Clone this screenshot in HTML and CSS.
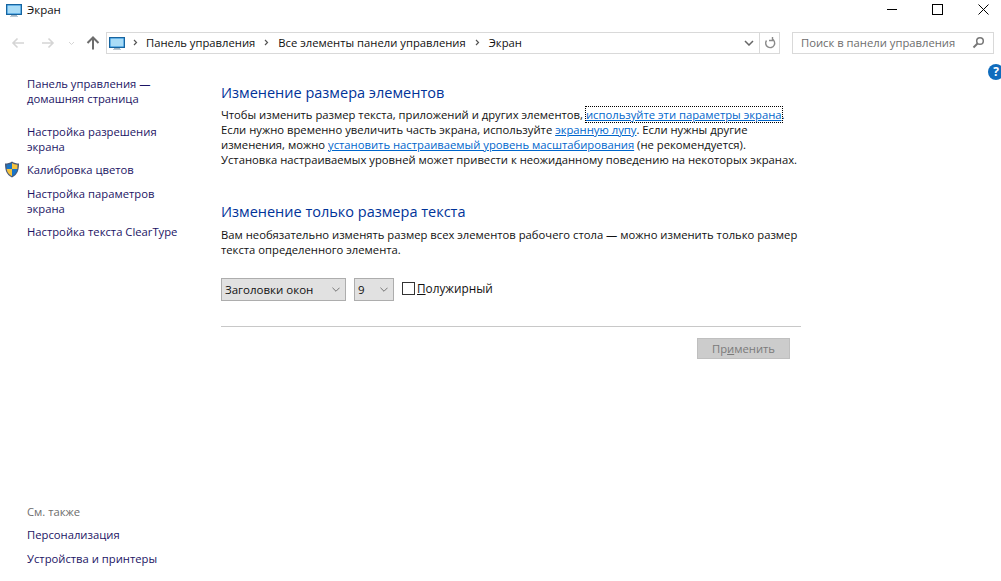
FILE: index.html
```html
<!DOCTYPE html>
<html lang="ru">
<head>
<meta charset="utf-8">
<title>Экран</title>
<link rel="stylesheet" href="styles.css">
</head>
<body>
<div class="window">
  <header class="titlebar">
    <svg class="monitor" width="16" height="14" viewBox="0 0 16 14"><rect x="0.5" y="0.5" width="15" height="10" fill="#1e86d4" stroke="#17649f"/><rect x="1.5" y="1.5" width="13" height="8" fill="#a9dcf7"/><rect x="5" y="11" width="6" height="1" fill="#9db4c4"/><rect x="4" y="12" width="8" height="1" fill="#b9c6d0"/></svg>
    <span class="title">Экран</span>
    <div class="winbtns">
      <svg class="winbtn" width="46" height="18" viewBox="0 0 46 18"><rect x="18" y="9" width="10" height="1" fill="#000"/></svg>
      <svg class="winbtn" width="46" height="18" viewBox="0 0 46 18"><rect x="17.500" y="4.500" width="10" height="10" fill="none" stroke="#000"/></svg>
      <svg class="winbtn" width="40" height="18" viewBox="0 0 40 18"><path d="M17.500 4.500l10 10M27.500 4.500l-10 10" fill="none" stroke="#000"/></svg>
    </div>
  </header>
  <nav class="navbar">
    <svg class="navarrow" width="14" height="12" viewBox="0 0 14 12"><path d="M13 6H2M6.500 1.500L2 6l4.500 4.500" fill="none" stroke="#d5d5d5" stroke-width="1.600"/></svg>
    <svg class="navarrow fwd" width="14" height="12" viewBox="0 0 14 12"><path d="M1 6h11M7.500 1.500L12 6l-4.500 4.500" fill="none" stroke="#d5d5d5" stroke-width="1.600"/></svg>
    <svg class="recent" width="7" height="5" viewBox="0 0 7 5"><path d="M1 1l2.500 2.500L6 1" fill="none" stroke="#d5d5d5"/></svg>
    <svg class="up" width="14" height="14" viewBox="0 0 14 14"><path d="M7 13.500V2M1.500 7L7 1.500 12.500 7" fill="none" stroke="#6d6d6d" stroke-width="2"/></svg>
    <div class="address">
      <svg class="monitor addr-icon" width="16" height="14" viewBox="0 0 16 14"><rect x="0.5" y="0.5" width="15" height="10" fill="#1e86d4" stroke="#17649f"/><rect x="1.5" y="1.5" width="13" height="8" fill="#a9dcf7"/><rect x="5" y="11" width="6" height="1" fill="#9db4c4"/><rect x="4" y="12" width="8" height="1" fill="#b9c6d0"/></svg>
      <svg class="crumb-sep first" width="5" height="7" viewBox="0 0 5 7"><path d="M1 1l2.500 2.500L1 6" fill="none" stroke="#555" stroke-width="1.200"/></svg>
      <span class="crumb">Панель управления</span>
      <svg class="crumb-sep" width="5" height="7" viewBox="0 0 5 7"><path d="M1 1l2.500 2.500L1 6" fill="none" stroke="#555" stroke-width="1.200"/></svg>
      <span class="crumb">Все элементы панели управления</span>
      <svg class="crumb-sep" width="5" height="7" viewBox="0 0 5 7"><path d="M1 1l2.500 2.500L1 6" fill="none" stroke="#555" stroke-width="1.200"/></svg>
      <span class="crumb">Экран</span>
      <svg class="addr-drop" width="10" height="6" viewBox="0 0 10 6"><path d="M1 1l4 4 4-4" fill="none" stroke="#666" stroke-width="1.500"/></svg>
      <span class="addr-refresh"><svg width="12" height="13" viewBox="0 0 12 13"><path d="M4 2.500A4.500 4.500 0 1 0 9.500 4M3.500 0.500v3.500H7" fill="none" stroke="#8a8a8a" stroke-width="1.400" transform="matrix(-1 0 0 1 12 0.500)"/></svg></span>
    </div>
    <div class="search">
      <span class="search-text">Поиск в панели управления</span>
      <svg width="13" height="13" viewBox="0 0 13 13"><circle cx="8" cy="5" r="3.300" fill="none" stroke="#777" stroke-width="1.500"/><path d="M5.500 7.500L1.500 11.500" stroke="#777" stroke-width="2"/></svg>
    </div>
  </nav>
  <div class="help">?</div>
  <div class="content">
    <aside class="sidebar">
      <a class="side-link home">Панель управления — домашняя страница</a>
      <a class="side-link">Настройка разрешения экрана</a>
      <a class="side-link shielded">
        <svg class="shield" width="16" height="17" viewBox="0 0 16 17"><path d="M8 0.500C6 2 3.500 2.500 1 2.500c0 6 1 11 7 14 6-3 7-8 7-14-2.500 0-5-.5-7-2z" fill="#4a5a78"/><path d="M8 2C6.500 3 4.500 3.500 2.500 3.700L2.700 8H8z" fill="#1a74c6"/><path d="M8 2v6h5.300l.2-4.300C11.500 3.500 9.500 3 8 2z" fill="#f4c33f"/><path d="M2.700 8C3 11 4.500 13.500 8 15.200V8z" fill="#f4c33f"/><path d="M8 8v7.200c3.500-1.700 5-4.200 5.300-7.200z" fill="#1a74c6"/></svg>
        Калибровка цветов
      </a>
      <a class="side-link">Настройка параметров экрана</a>
      <a class="side-link">Настройка текста ClearType</a>
      <div class="see-also">
        <div class="see-label">См. также</div>
        <a class="side-link">Персонализация</a>
        <a class="side-link">Устройства и принтеры</a>
      </div>
    </aside>
    <main class="main">
      <h2 class="heading">Изменение размера элементов</h2>
      <p class="para">Чтобы изменить размер текста, приложений и других элементов, <a class="link focused">используйте эти параметры экрана</a>.<br>Если нужно временно увеличить часть экрана, используйте <a class="link">экранную лупу</a>. Если нужны другие<br>изменения, можно <a class="link">установить настраиваемый уровень масштабирования</a> (не рекомендуется).<br>Установка настраиваемых уровней может привести к неожиданному поведению на некоторых экранах.</p>
      <h2 class="heading second">Изменение только размера текста</h2>
      <p class="para">Вам необязательно изменять размер всех элементов рабочего стола — можно изменить только размер<br>текста определенного элемента.</p>
      <div class="controls">
        <div class="select wide"><span>Заголовки окон</span><svg width="8" height="5" viewBox="0 0 9 5"><path d="M0.500 0.500l4 4 4-4" fill="none" stroke="#666"/></svg></div>
        <div class="select narrow"><span>9</span><svg width="8" height="5" viewBox="0 0 9 5"><path d="M0.500 0.500l4 4 4-4" fill="none" stroke="#666"/></svg></div>
        <label class="check"><span class="box"></span><span><u>П</u>олужирный</span></label>
      </div>
      <div class="rule"></div>
      <div class="actions"><div class="apply">Пр<u>и</u>менить</div></div>
    </main>
  </div>
</div>
</body>
</html>
```
FILE: styles.css
```css
* { box-sizing: border-box; }
html, body { margin: 0; height: 100%; }
body { background: #fff; color: #111; font-family: "Open Sans", "Noto Sans", sans-serif; font-size: 11.250px; line-height: 15px; overflow: hidden; }
.window { position: relative; width: 1001px; height: 581px; display: flex; flex-direction: column; }
.titlebar { height: 18px; display: flex; align-items: center; padding-left: 6px; flex: none; }
.titlebar .monitor { margin-top: 3px; }
.title { margin-left: 5px; font-size: 11.500px; }
.winbtns { margin-left: auto; display: flex; }
.winbtn { display: block; }
.navbar { height: 22px; margin-top: 14px; flex: none; display: flex; align-items: center; padding-left: 11px; }
.fwd { margin-left: 16px; }
.recent { margin-left: 13px; }
.up { margin-left: 11px; }
.address { margin-left: 6px; width: 674px; height: 22px; border: 1px solid #d9d9d9; display: flex; align-items: center; padding-left: 2px; padding-bottom: 1px; }
.addr-icon { margin-top: 2px; }
.crumb-sep { margin: 0 9px; flex: none; }
.crumb-sep.first { margin: 0 8px; }
.crumb { white-space: nowrap; }
.addr-drop { margin-left: auto; margin-right: 5px; }
.addr-refresh { width: 20px; height: 20px; border-left: 1px solid #d9d9d9; display: flex; align-items: center; justify-content: center; }
.search { margin-left: 12px; width: 202px; height: 22px; border: 1px solid #d9d9d9; display: flex; align-items: center; justify-content: space-between; padding: 0 8px 1px; color: #6d6d6d; }
.help { position: absolute; left: 988px; top: 64px; width: 16px; height: 16px; border-radius: 50%; background: #0f6cbd; color: #fff; font-weight: 700; font-size: 12px; line-height: 16px; text-align: center; }
.content { flex: 1; display: flex; min-height: 0; }
.sidebar { width: 221px; flex: none; padding: 22px 0 15px 27px; display: flex; flex-direction: column; }
.side-link { display: block; color: #1b1464; width: 153px; margin-bottom: 8px; position: relative; }
.home { margin-bottom: 18px; }
.shielded { white-space: nowrap; margin-bottom: 9px; }
.shield { position: absolute; left: -23px; top: -1px; }
.see-also { margin-top: auto; }
.see-also .side-link { width: auto; white-space: nowrap; margin-bottom: 9px; }
.see-also .side-link:last-child { margin-bottom: 0; }
.see-label { color: #6d6d6d; margin-bottom: 8px; }
.main { width: 580px; padding-top: 29px; flex: none; }
.heading { margin: 0 0 4px; font-size: 14.500px; line-height: 20px; font-weight: 400; color: #003399; }
.second { margin-top: 35px; margin-bottom: 5px; }
.para { margin: 0; white-space: nowrap; }
.link { color: #0066cc; text-decoration: underline; }
.focused { outline: 1px dotted #000; outline-offset: 0; }
.controls { margin-top: 21px; display: flex; align-items: center; font-size: 11.500px; }
.select { height: 23px; background: #e1e1e1; border: 1px solid #adadad; display: flex; align-items: center; justify-content: space-between; padding: 0 5px 1px 3px; }
.wide { width: 125px; }
.narrow { width: 40px; margin-left: 8px; }
.check { margin-left: 8px; display: flex; align-items: center; gap: 2px; margin-top: -2px; font-size: 11.800px; }
.box { width: 13px; height: 13px; border: 1px solid #333; background: #fff; }
.rule { margin-top: 25px; height: 1px; background: #c8c8c8; }
.actions { display: flex; justify-content: flex-end; margin-top: 11px; padding-right: 11px; }
.apply { width: 93px; height: 21px; background: #cccccc; border: 1px solid #bfbfbf; color: #7a7a7a; text-align: center; line-height: 19px; }
```
